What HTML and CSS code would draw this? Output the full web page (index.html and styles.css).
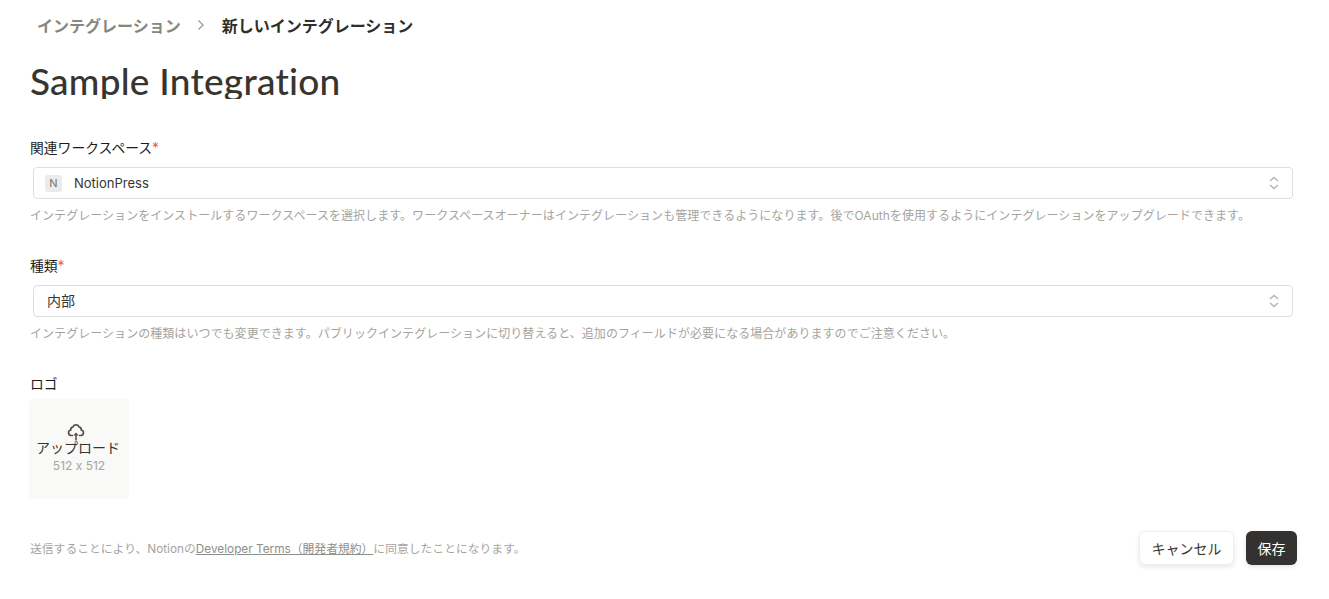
FILE: index.html
```html
<!DOCTYPE html>
<html lang="ja">
<head>
    <meta charset="UTF-8">
    <title>新しいインテグレーション</title>
    <link rel="stylesheet" href="styles.css">
</head>
<body>
    <nav class="breadcrumb">
        <a href="#" class="crumb">インテグレーション</a>
        <svg class="crumb-sep" width="8" height="12" viewBox="0 0 8 12"><path d="M1.5 1.5 6 6l-4.500 4.500" fill="none" stroke="#999" stroke-width="1.300"/></svg>
        <span class="crumb-current">新しいインテグレーション</span>
    </nav>
    <h1 class="title">Sample Integration</h1>

    <form>
        <div class="field field-workspace">
            <label class="label">関連ワークスペース<span class="req">*</span></label>
            <div class="select">
                <span class="ws-icon">N</span>
                <span class="select-value ws-name">NotionPress</span>
                <svg class="updown" width="10" height="14" viewBox="0 0 10 14"><path d="M1 5 5 1.500 9 5M1 9l4 3.500L9 9" fill="none" stroke="#b5b5b2" stroke-width="1.500"/></svg>
            </div>
            <p class="hint">インテグレーションをインストールするワークスペースを選択します。ワークスペースオーナーはインテグレーションも管理できるようになります。後でOAuthを使用するようにインテグレーションをアップグレードできます。</p>
        </div>

        <div class="field field-type">
            <label class="label">種類<span class="req">*</span></label>
            <div class="select">
                <span class="select-value plain">内部</span>
                <svg class="updown" width="10" height="14" viewBox="0 0 10 14"><path d="M1 5 5 1.500 9 5M1 9l4 3.500L9 9" fill="none" stroke="#b5b5b2" stroke-width="1.500"/></svg>
            </div>
            <p class="hint">インテグレーションの種類はいつでも変更できます。パブリックインテグレーションに切り替えると、追加のフィールドが必要になる場合がありますのでご注意ください。</p>
        </div>

        <div class="field field-logo">
            <label class="label">ロゴ</label>
            <div class="upload">
                <svg class="upload-icon" width="18" height="18" viewBox="0 0 18 18"><path d="M6 12.500H4a2.800 2.800 0 0 1-.3-5.500A3 3 0 0 1 6 3.800a3.300 3.300 0 0 1 6 0A3 3 0 0 1 14.300 7a2.800 2.800 0 0 1-.3 5.500h-2" fill="none" stroke="#55534e" stroke-width="1.700"/><path d="M8.200 17.500V12.500H6.200L9 9.500l2.800 3H9.800v5z" fill="#55534e"/></svg>
                <span class="upload-text">アップロード</span>
                <span class="upload-size">512 x 512</span>
            </div>
        </div>

        <div class="footer">
            <p class="terms">送信することにより、Notionの<a href="#">Developer Terms（開発者規約）</a>に同意したことになります。</p>
            <div class="buttons">
                <button type="button" class="btn btn-cancel">キャンセル</button>
                <button type="button" class="btn btn-save">保存</button>
            </div>
        </div>
    </form>
</body>
</html>
```
FILE: styles.css
```css
*,::after,::before{
    padding: 0;
    margin: 0;
    box-sizing: border-box;
}

body{
    font-family: 'Inter', 'Noto Sans CJK JP', sans-serif;
    font-feature-settings: "calt" 0;
    color: #37352f;
    background: white;
    padding: 0 32px 0 30px;
    height: 599px;
    overflow: hidden;
}

a{
    color: inherit;
}

.breadcrumb{
    display: flex;
    align-items: center;
    height: 50px;
    padding-left: 7px;
    font-size: 16px;
    font-weight: 700;
}

.crumb{
    color: #87867f;
    text-decoration: none;
}

.crumb-sep{
    margin: 0 17px 0 16px;
}

.crumb-current{
    color: #2f2e2a;
}

/* the descenders are cut off in the original too */
.title{
    font-family: 'Lato', 'Inter', sans-serif;
    font-size: 37px;
    font-weight: 500;
    line-height: 61px;
    height: 49px;
    overflow: hidden;
    letter-spacing: 0.25px;
}

.field-workspace{
    margin-top: 40px;
}

.field-type,
.field-logo{
    margin-top: 33px;
}

.label{
    display: block;
    font-size: 13.800px;
    line-height: 18px;
    height: 20px;
    color: #1d1c19;
}

.req{
    color: #eb5757;
}

.select{
    display: flex;
    align-items: center;
    height: 32px;
    margin: 8px 4px 0 3px;
    padding: 0 13px 0 11px;
    border: 1px solid #dededc;
    border-radius: 4px;
    font-size: 14px;
}

.ws-icon{
    display: flex;
    align-items: center;
    justify-content: center;
    width: 17px;
    height: 17px;
    border-radius: 3px;
    background: #ebebea;
    color: #76756f;
    font-size: 11px;
    margin-right: 12px;
}

.select-value{
    flex: 1;
}

.ws-name{
    font-size: 13px;
}

.select-value.plain{
    padding: 0 0 3px 2px;
}

.hint{
    margin-top: 9px;
    font-size: 12px;
    line-height: 16px;
    letter-spacing: 0.05px;
    color: #a5a4a0;
    white-space: nowrap;
}

.upload{
    display: flex;
    flex-direction: column;
    align-items: center;
    width: 100px;
    height: 100px;
    margin: 4px 0 0 -1px;
    padding-top: 24px;
    border-radius: 4px;
    background: #f9f9f7;
}

.upload-icon{
    display: block;
    margin-left: -6px;
}

.upload-text{
    font-size: 14px;
    line-height: 18px;
    margin: -2px 0 0 -2px;
    white-space: nowrap;
}

.upload-size{
    font-size: 12px;
    line-height: 18px;
    color: #a5a4a0;
}

.footer{
    display: flex;
    align-items: center;
    justify-content: space-between;
    margin-top: 32px;
}

.terms{
    font-size: 11.800px;
    line-height: 16px;
    margin-top: 1px;
    color: #a5a4a0;
}

.terms a{
    color: #8f8e89;
}

.buttons{
    display: flex;
    gap: 12px;
}

.btn{
    height: 34px;
    border-radius: 6px;
    font-family: inherit;
    font-size: 14px;
}

.btn-cancel{
    width: 95px;
    border: 1px solid #efefee;
    background: white;
    color: #37352f;
    box-shadow: 0 2px 5px rgba(0, 0, 0, 0.1);
}

.btn-save{
    width: 51px;
    border: none;
    background: #333230;
    color: white;
    box-shadow: 0 2px 5px rgba(0, 0, 0, 0.1);
}
```
